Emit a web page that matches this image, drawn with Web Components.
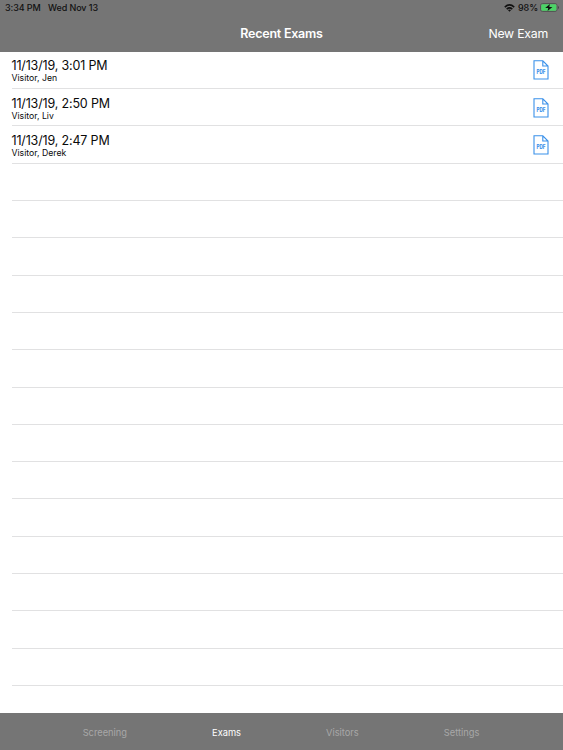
<!DOCTYPE html>
<html lang="en">
<head>
<meta charset="utf-8">
<title>Recent Exams</title>
<style>
    html, body {
        margin: 0;
        height: 100%;
        overflow: hidden;
        background: #fff;
        font-family: Inter, "Liberation Sans", sans-serif;
    }
</style>
</head>
<body>
<exam-app></exam-app>

<script>
class StatusBar extends HTMLElement {
    constructor() {
        super();
        this.attachShadow({ mode: "open" });
        this.shadowRoot.innerHTML = `
            <style>
                :host {
                    display: flex;
                    align-items: center;
                    height: 15px;
                    padding: 0 4px 0 5px;
                    font-size: 9px;
                    font-weight: 500;
                    letter-spacing: -0.09px;
                    color: #111;
                    white-space: nowrap;
                }
                .date { margin-left: 7.3px; }
                .right {
                    display: flex;
                    align-items: center;
                    margin-left: auto;
                }
                .wifi { margin-right: 3px; }
                .battery { margin-left: 2px; }
                svg { display: block; }
            </style>
            <span class="time"><slot name="time"></slot></span>
            <span class="date"><slot name="date"></slot></span>
            <div class="right">
                <svg class="wifi" width="11" height="8" viewBox="0 0 11 8" fill="none" stroke="#111" stroke-width="1.6">
                    <path d="M.8 3.1Q5.5-1.2 10.2 3.1M2.7 5.1Q5.5 2.7 8.3 5.1"/>
                    <path d="M3.9 6.1Q5.5 4.8 7.1 6.1L5.5 7.8z" fill="#111" stroke="none"/>
                </svg>
                <span><slot name="charge"></slot></span>
                <svg class="battery" width="19" height="9" viewBox="0 0 19 9">
                    <rect x=".5" y=".5" width="16.6" height="8" rx="2.2" fill="none" stroke="#555"/>
                    <rect x="1.2" y="1.2" width="15.2" height="6.6" rx="1.4" fill="#4bd466"/>
                    <path d="M18 3v3q.9-.4.9-1.5T18 3z" fill="#444"/>
                    <path d="M9.9 .9L5.2 5h3L7.6 8.1l4.8-4.2H9.3z" fill="#111"/>
                </svg>
            </div>
        `;
    }
}

class NavBar extends HTMLElement {
    constructor() {
        super();
        this.attachShadow({ mode: "open" });
        this.shadowRoot.innerHTML = `
            <style>
                :host {
                    display: grid;
                    grid-template-columns: 1fr auto 1fr;
                    align-items: center;
                    height: 36px;
                    padding: 0 15px;
                    color: #fff;
                    font-size: 12.5px;
                    letter-spacing: -0.24px;
                    white-space: nowrap;
                }
                .title {
                    grid-column: 2;
                    font-weight: 600;
                }
                .action {
                    justify-self: end;
                    font-size: 12.3px;
                }
            </style>
            <span class="title"><slot></slot></span>
            <span class="action"><slot name="action"></slot></span>
        `;
    }
}

class PdfIcon extends HTMLElement {
    constructor() {
        super();
        this.attachShadow({ mode: "open" });
        this.shadowRoot.innerHTML = `
            <style>
                :host {
                    display: block;
                    padding-top: 1px;
                }
                svg { display: block; }
                text {
                    font: 800 5.6px Inter, "Liberation Sans", sans-serif;
                }
            </style>
            <svg width="16" height="20" viewBox="0 0 16 20" fill="none" stroke="#3a91ea" stroke-width="1.1">
                <path d="M1 .8H9.8L15 6V19H1zM9.8 .8V6H15"/>
                <text x="8" y="13.5" text-anchor="middle" fill="#3a91ea" stroke="none" textLength="9" lengthAdjust="spacingAndGlyphs">PDF</text>
            </svg>
        `;
    }
}

class ExamRow extends HTMLElement {
    constructor() {
        super();
        this.attachShadow({ mode: "open" });
        this.shadowRoot.innerHTML = `
            <style>
                :host {
                    display: flex;
                    align-items: center;
                    justify-content: space-between;
                    box-sizing: border-box;
                    height: 37.32px;
                    margin-left: 11.5px;
                    padding-right: 14px;
                    border-bottom: 1px solid #e1e1e2;
                    color: #0a0a0a;
                    white-space: nowrap;
                }
                .date {
                    font-size: 12.5px;
                    letter-spacing: -0.16px;
                    line-height: 15px;
                }
                .visitor {
                    font-size: 8.7px;
                    line-height: 11px;
                }
                .text { padding-top: 2.8px; }
            </style>
            <div class="text">
                <div class="date"><slot name="date"></slot></div>
                <div class="visitor"><slot name="visitor"></slot></div>
            </div>
            <slot name="icon"></slot>
        `;
    }
}

class TabBar extends HTMLElement {
    constructor() {
        super();
        this.attachShadow({ mode: "open" });
        this.shadowRoot.innerHTML = `
            <style>
                :host {
                    display: flex;
                    justify-content: center;
                    align-items: center;
                    gap: 85px;
                    box-sizing: border-box;
                    height: 37.5px;
                    padding: 2px 1px 0 0;
                    background: #757575;
                    font-size: 9.3px;
                    color: #a8a8a8;
                }
                ::slotted([selected]) {
                    color: #fff;
                }
            </style>
            <slot></slot>
        `;
    }
}

class ExamApp extends HTMLElement {
    constructor() {
        super();
        const exams = [
            { date: "11/13/19, 3:01 PM", visitor: "Visitor, Jen" },
            { date: "11/13/19, 2:50 PM", visitor: "Visitor, Liv" },
            { date: "11/13/19, 2:47 PM", visitor: "Visitor, Derek" }
        ];
        const emptyRows = 14;

        this.attachShadow({ mode: "open" });
        this.shadowRoot.innerHTML = `
            <style>
                :host {
                    display: flex;
                    flex-direction: column;
                    height: 750px;
                }
                header {
                    height: 51.5px;
                    flex: none;
                    background: #757575;
                }
                main {
                    flex: 1;
                    min-height: 0;
                    padding-top: 0.2px;
                    overflow: hidden;
                }
                tab-bar { flex: none; }
            </style>
            <header>
                <status-bar>
                    <span slot="time">3:34 PM</span>
                    <span slot="date">Wed Nov 13</span>
                    <span slot="charge">98%</span>
                </status-bar>
                <nav-bar>Recent Exams<span slot="action">New Exam</span></nav-bar>
            </header>
            <main>
                ${exams.map((exam) => `
                    <exam-row>
                        <span slot="date">${exam.date}</span>
                        <span slot="visitor">${exam.visitor}</span>
                        <pdf-icon slot="icon"></pdf-icon>
                    </exam-row>`).join("")}
                ${"<exam-row></exam-row>".repeat(emptyRows)}
            </main>
            <tab-bar>
                <span>Screening</span>
                <span selected>Exams</span>
                <span>Visitors</span>
                <span>Settings</span>
            </tab-bar>
        `;
    }
}

customElements.define("status-bar", StatusBar);
customElements.define("nav-bar", NavBar);
customElements.define("pdf-icon", PdfIcon);
customElements.define("exam-row", ExamRow);
customElements.define("tab-bar", TabBar);
customElements.define("exam-app", ExamApp);
</script>
</body>
</html>
